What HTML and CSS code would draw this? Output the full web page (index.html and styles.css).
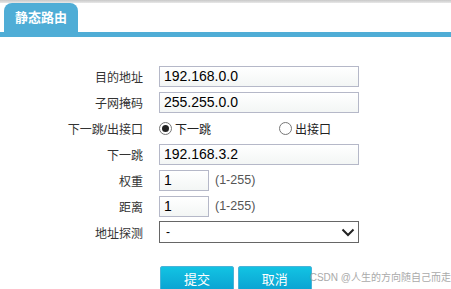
FILE: index.html
```html
<!DOCTYPE html>
<html lang="zh-CN">
<head>
    <meta charset="UTF-8">
    <title>静态路由</title>
    <link rel="stylesheet" href="styles.css">
</head>
<body>
<div class="topline"></div>
<div class="tabs">
    <div class="tab">静态路由</div>
</div>
<form class="route-form">
    <div class="row">
        <label>目的地址</label>
        <input class="text long" type="text" value="192.168.0.0">
    </div>
    <div class="row">
        <label>子网掩码</label>
        <input class="text long" type="text" value="255.255.0.0">
    </div>
    <div class="row">
        <label>下一跳/出接口</label>
        <div class="radios">
            <span class="radio-item first"><span class="radio checked"></span>下一跳</span>
            <span class="radio-item"><span class="radio"></span>出接口</span>
        </div>
    </div>
    <div class="row">
        <label>下一跳</label>
        <input class="text long" type="text" value="192.168.3.2">
    </div>
    <div class="row">
        <label>权重</label>
        <input class="text short" type="text" value="1">
        <span class="hint">(1-255)</span>
    </div>
    <div class="row">
        <label>距离</label>
        <input class="text short" type="text" value="1">
        <span class="hint">(1-255)</span>
    </div>
    <div class="row">
        <label>地址探测</label>
        <div class="select">
            <span>-</span>
            <svg width="14" height="9" viewBox="0 0 14 9"><path d="M1.5 1.5 L7 7 L12.5 1.5" fill="none" stroke="#222" stroke-width="2"/></svg>
        </div>
    </div>
    <div class="buttons">
        <button type="button">提交</button>
        <button type="button">取消</button>
        <span class="watermark">CSDN @人生的方向随自己而走</span>
    </div>
</form>
</body>
</html>
```

FILE: styles.css
```css
body {
    margin: 0;
    background: #fff;
    font-family: "Liberation Sans", "Noto Sans CJK SC", sans-serif;
    font-size: 12px;
    color: #333;
    overflow: hidden;
}

.topline {
    height: 3px;
    background: linear-gradient(#c8c8c8, #e8e8e8);
}

.tabs {
    height: 29px;
    padding-left: 4px;
    border-bottom: 5px solid #4fadd6;
}

.tab {
    width: 74px;
    height: 29px;
    background: #4fadd6;
    border-radius: 8px 8px 0 0;
    color: #fff;
    font-weight: bold;
    font-size: 13px;
    line-height: 29px;
    text-align: center;
}

.route-form {
    padding-top: 26px;
}

.row {
    display: flex;
    align-items: center;
    height: 26px;
}

.row label {
    width: 143px;
    padding-right: 16px;
    text-align: right;
    color: #333;
    font-size: 12px;
}

.text {
    box-sizing: border-box;
    height: 21px;
    margin: 0;
    padding: 0 4px;
    border: 1px solid #b5b8c8;
    background: linear-gradient(#fff, #f3f6f5);
    font-family: "Liberation Sans", sans-serif;
    font-size: 14px;
    color: #000;
}

.long {
    width: 200px;
}

.short {
    width: 50px;
}

.hint {
    margin-left: 6px;
    color: #555;
    font-size: 12.5px;
}

.radios {
    display: flex;
    align-items: center;
}

.radio-item {
    display: flex;
    align-items: center;
    color: #222;
}

.radio-item.first {
    width: 120px;
}

.radio {
    box-sizing: border-box;
    width: 13px;
    height: 13px;
    margin-right: 3px;
    border: 1px solid #777;
    border-radius: 50%;
    background: #fff;
    position: relative;
}

.radio.checked::after {
    content: "";
    position: absolute;
    left: 2px;
    top: 2px;
    width: 7px;
    height: 7px;
    border-radius: 50%;
    background: #222;
}

.select {
    box-sizing: border-box;
    width: 200px;
    height: 22px;
    display: flex;
    align-items: center;
    justify-content: space-between;
    padding: 0 3px 0 6px;
    border: 1px solid #666;
    color: #000;
}

.buttons {
    display: flex;
    align-items: flex-start;
    gap: 4px;
    padding: 21px 0 0 160px;
}

.buttons button {
    width: 77px;
    height: 28px;
    padding: 0;
    border: 1px solid #4ab3d8;
    border-radius: 2px;
    background: linear-gradient(#12c3e3, #0a9fd0);
    color: #fff;
    font-family: "Liberation Sans", "Noto Sans CJK SC", sans-serif;
    font-size: 13px;
    line-height: 26px;
}

.watermark {
    margin: 5px 0 0 -6px;
    color: #aaa;
    font-size: 10px;
    line-height: 14px;
    white-space: nowrap;
}
```
